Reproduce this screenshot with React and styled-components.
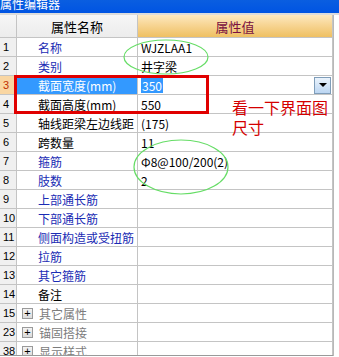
import React from 'react';
import styled, { createGlobalStyle } from 'styled-components';

const GlobalStyle = createGlobalStyle`
  html, body {
    margin: 0;
    padding: 0;
    background: #ffffff;
  }
  body {
    font-family: "Noto Sans CJK SC", "Liberation Sans", sans-serif;
    font-size: 12px;
  }
`;

const Window = styled.div`
  position: relative;
  width: 339px;
  height: 357px;
  overflow: hidden;
  background: #ffffff;
`;

const TitleBar = styled.div`
  height: 13px;
  overflow: hidden;
  background: linear-gradient(#0a5ee0, #0054e3);
  border-bottom: 2px solid #dcdcdc;
`;

const TitleText = styled.span`
  display: block;
  margin-top: -5px;
  line-height: 18px;
  font-size: 12px;
  color: #ffffff;
`;

const Table = styled.div`
  width: 334px;
  border-right: 1px solid #b8b8b8;
  box-sizing: border-box;
`;

const Row = styled.div`
  display: grid;
  grid-template-columns: 17px 121px 195px;
  height: ${p => (p.$header ? 23 : 19)}px;
`;

const Body = styled.div`
  height: 317px;
  overflow: hidden;
  border-bottom: 1px solid #9a9a9a;
`;

const Cell = styled.div`
  box-sizing: border-box;
  display: flex;
  align-items: center;
  border-right: 1px solid #c4c4c4;
  border-bottom: 1px solid #c4c4c4;
  white-space: nowrap;
  overflow: hidden;
`;

const IndexCell = styled(Cell)`
  padding-left: 3px;
  background: ${p => (p.$selected ? '#f9d6a2' : '#f0f0f0')};
  color: ${p => (p.$selected ? '#c03000' : '#000000')};
  font-family: "Liberation Sans", sans-serif;
  font-size: 11px;
`;

const HeadCell = styled(Cell)`
  justify-content: center;
  font-size: 13px;
  background: ${p => (p.$value
    ? 'linear-gradient(#fde9c0, #f7d594 45%, #efc062)'
    : 'linear-gradient(#f6f6f6, #ececec)')};
  color: ${p => (p.$value ? '#7a1040' : '#000000')};
`;

const nameColors = { blue: '#1a2cb4', black: '#000000', group: '#7c7c7c' };

const NameCell = styled(Cell)`
  padding-left: ${p => (p.$group ? 4 : 21)}px;
  gap: 6px;
  background: ${p => (p.$selected ? '#3399ff' : '#ffffff')};
  color: ${p => (p.$selected ? '#ffffff' : nameColors[p.$tone])};
`;

const ValueCell = styled(Cell)`
  padding-left: 3px;
  padding-right: 1px;
  color: #000000;
`;

const Selection = styled.span`
  background: #3399ff;
  color: #ffffff;
  padding: 0 1px;
  line-height: 15px;
`;

const DropButton = styled.div`
  margin-left: auto;
  width: 15px;
  height: 15px;
  border: 1px solid #7f9db9;
  background: linear-gradient(#eaf3fc, #bcd6f2);
  display: flex;
  align-items: center;
  justify-content: center;
`;

const Arrow = styled.div`
  width: 0;
  height: 0;
  border-left: 4px solid transparent;
  border-right: 4px solid transparent;
  border-top: 4px solid #000000;
`;

const PlusBox = styled.div`
  width: 9px;
  height: 9px;
  border: 1px solid #9a9a9a;
  background: linear-gradient(#f4f4f4, #dcdcdc);
  color: #000000;
  font-family: "Liberation Sans", sans-serif;
  font-size: 11px;
  line-height: 9px;
  text-align: center;
  margin-left: 1px;
`;

const Mark = styled.div`
  position: absolute;
  left: 14px;
  top: 75px;
  width: 195px;
  height: 39px;
  box-sizing: border-box;
  border: 3px solid #e00000;
  pointer-events: none;
`;

const Note = styled.div`
  position: absolute;
  left: 232px;
  top: 97px;
  color: #d40000;
  font-size: 16px;
  line-height: 20px;
  pointer-events: none;
`;

const Sketch = styled.svg`
  position: absolute;
  left: 0;
  top: 0;
  pointer-events: none;
`;

const rows = [
  { n: 1, name: '名称', tone: 'blue', value: 'WJZLAA1' },
  { n: 2, name: '类别', tone: 'blue', value: '井字梁' },
  { n: 3, name: '截面宽度(mm)', tone: 'black', value: '350', selected: true },
  { n: 4, name: '截面高度(mm)', tone: 'black', value: '550' },
  { n: 5, name: '轴线距梁左边线距', tone: 'black', value: '(175)' },
  { n: 6, name: '跨数量', tone: 'black', value: '11' },
  { n: 7, name: '箍筋', tone: 'blue', value: 'Φ8@100/200(2)' },
  { n: 8, name: '肢数', tone: 'blue', value: '2' },
  { n: 9, name: '上部通长筋', tone: 'blue' },
  { n: 10, name: '下部通长筋', tone: 'blue' },
  { n: 11, name: '侧面构造或受扭筋', tone: 'blue' },
  { n: 12, name: '拉筋', tone: 'blue' },
  { n: 13, name: '其它箍筋', tone: 'blue' },
  { n: 14, name: '备注', tone: 'black' },
  { n: 15, name: '其它属性', tone: 'group', group: true },
  { n: 23, name: '锚固搭接', tone: 'group', group: true },
  { n: 38, name: '显示样式', tone: 'group', group: true },
];

function PropertyRow({ row }) {
  return (
    <Row>
      <IndexCell $selected={row.selected}>{row.n}</IndexCell>
      <NameCell $tone={row.tone} $group={row.group} $selected={row.selected}>
        {row.group && <PlusBox>+</PlusBox>}
        {row.name}
      </NameCell>
      <ValueCell>
        {row.selected ? <Selection>{row.value}</Selection> : row.value}
        {row.selected && (
          <DropButton>
            <Arrow />
          </DropButton>
        )}
      </ValueCell>
    </Row>
  );
}

export default function App() {
  return (
    <Window>
      <GlobalStyle />
      <TitleBar>
        <TitleText>属性编辑器</TitleText>
      </TitleBar>
      <Table>
        <Row $header>
          <HeadCell />
          <HeadCell>属性名称</HeadCell>
          <HeadCell $value>属性值</HeadCell>
        </Row>
        <Body>
          {rows.map(r => (
            <PropertyRow key={r.n} row={r} />
          ))}
        </Body>
      </Table>
      <Mark />
      <Note>
        看一下界面图
        <br />
        尺寸
      </Note>
      <Sketch width="339" height="357">
        <ellipse cx="166" cy="57" rx="42" ry="17" fill="none" stroke="#66dd66" strokeWidth="1.2" />
        <ellipse cx="181" cy="167" rx="47" ry="27" fill="none" stroke="#66dd66" strokeWidth="1.2" />
      </Sketch>
    </Window>
  );
}
